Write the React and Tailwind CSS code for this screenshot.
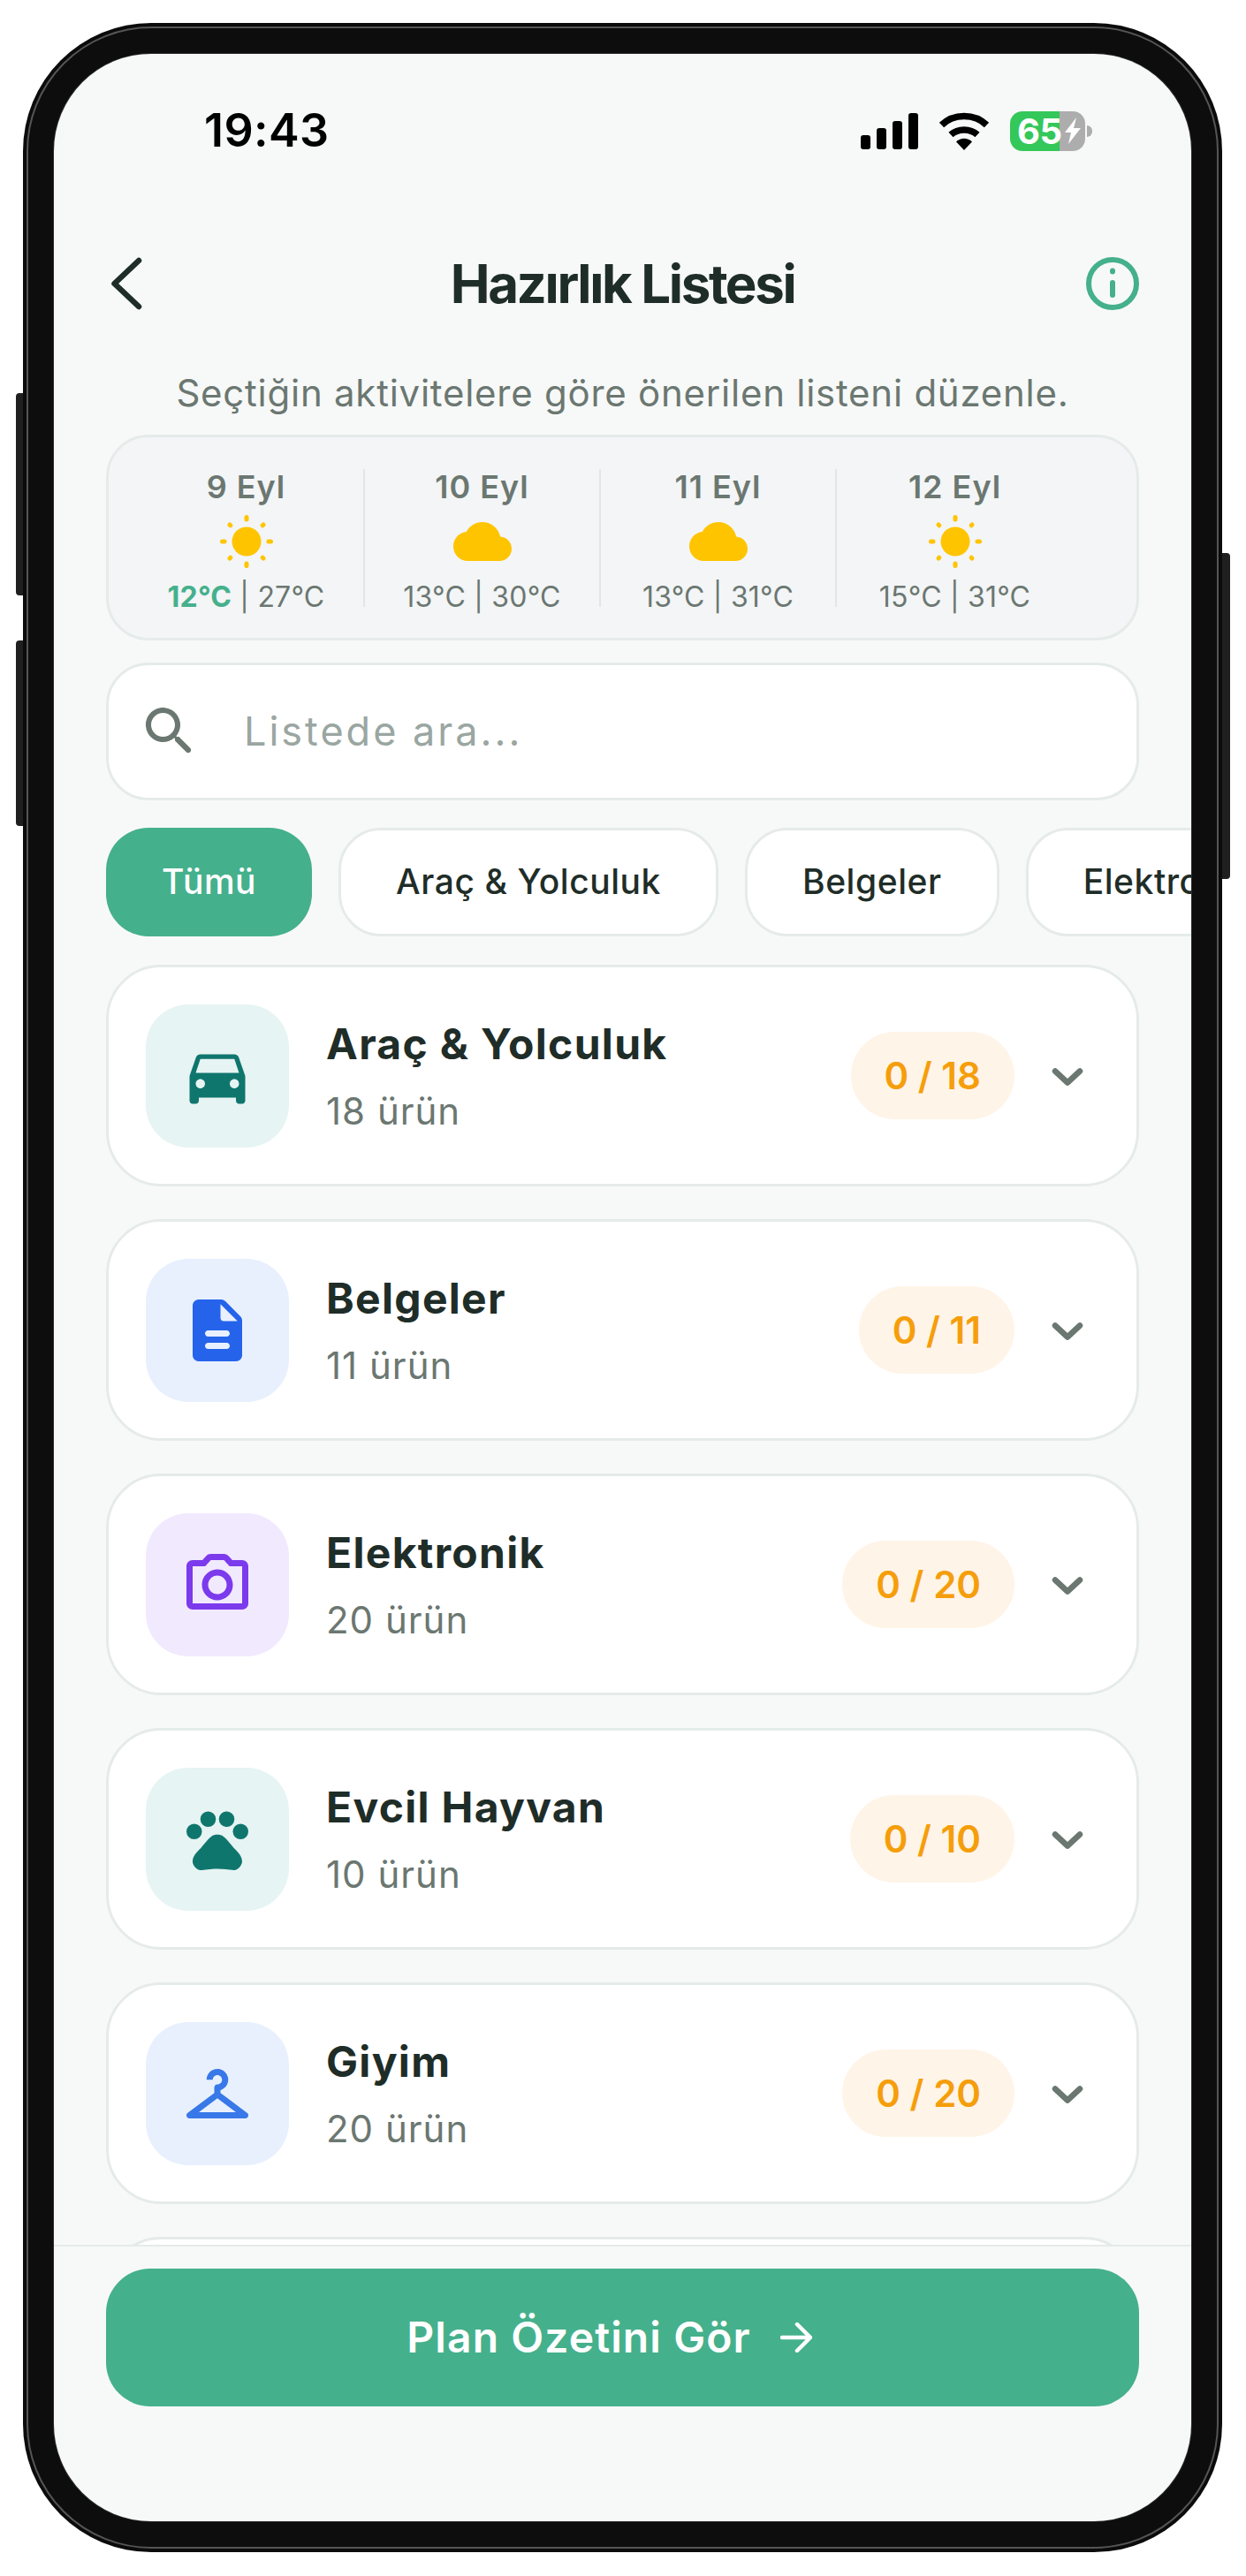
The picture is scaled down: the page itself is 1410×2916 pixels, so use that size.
const days = [
  { date: '9 Eyl', low: '12°C', high: '27°C', icon: 'sun', active: true },
  { date: '10 Eyl', low: '13°C', high: '30°C', icon: 'cloud' },
  { date: '11 Eyl', low: '13°C', high: '31°C', icon: 'cloud' },
  { date: '12 Eyl', low: '15°C', high: '31°C', icon: 'sun' },
]

const chips = ['Araç & Yolculuk', 'Belgeler', 'Elektronik']

const paths = {
  car: 'M18.92 6.01C18.72 5.42 18.16 5 17.5 5h-11c-.66 0-1.21.42-1.42 1.01L3 12v8c0 .55.45 1 1 1h1c.55 0 1-.45 1-1v-1h12v1c0 .55.45 1 1 1h1c.55 0 1-.45 1-1v-8l-2.08-5.99zM6.5 16c-.83 0-1.5-.67-1.5-1.5S5.67 13 6.5 13s1.5.67 1.5 1.5S7.33 16 6.5 16zm11 0c-.83 0-1.5-.67-1.5-1.5s.67-1.5 1.5-1.5 1.5.67 1.5 1.5-.67 1.5-1.5 1.5zM5 11l1.5-4.5h11L19 11H5z',
  doc: 'M14.59 2.59c-.38-.38-.89-.59-1.42-.59H6c-1.1 0-2 .9-2 2v16c0 1.1.89 2 1.99 2H18c1.1 0 2-.9 2-2V8.83c0-.53-.21-1.04-.59-1.41l-4.82-4.83zM15 18H9c-.55 0-1-.45-1-1s.45-1 1-1h6c.55 0 1 .45 1 1s-.45 1-1 1zm0-4H9c-.55 0-1-.45-1-1s.45-1 1-1h6c.55 0 1 .45 1 1s-.45 1-1 1zm-2-6V3.5L18.5 9H14c-.55 0-1-.45-1-1z',
  camera: 'M20 4h-3.17l-1.24-1.35A1.99 1.99 0 0 0 14.12 2H9.88c-.56 0-1.1.24-1.48.65L7.17 4H4c-1.1 0-2 .9-2 2v12c0 1.1.9 2 2 2h16c1.1 0 2-.9 2-2V6c0-1.1-.9-2-2-2zm0 14H4V6h4.05l1.83-2h4.24l1.83 2H20v12zM12 7c-2.76 0-5 2.24-5 5s2.24 5 5 5 5-2.24 5-5-2.24-5-5-5zm0 8c-1.65 0-3-1.35-3-3s1.35-3 3-3 3 1.35 3 3-1.35 3-3 3z',
  paw: 'M17.34 14.86c-.87-1.02-1.6-1.89-2.48-2.91-.46-.54-1.05-1.08-1.75-1.32-.11-.04-.22-.07-.33-.09-.25-.04-.52-.04-.78-.04s-.53 0-.79.05c-.11.02-.22.05-.33.09-.7.24-1.28.78-1.75 1.32-.87 1.02-1.6 1.89-2.48 2.91-1.31 1.31-2.92 2.76-2.62 4.79.29 1.02 1.02 2.03 2.33 2.32.73.15 3.06-.44 5.54-.44h.18c2.48 0 4.81.58 5.54.44 1.31-.29 2.04-1.31 2.33-2.32.31-2.04-1.3-3.49-2.61-4.8z',
  hanger: 'M21.6 18.2 13 11.75v-.91c1.65-.49 2.8-2.17 2.43-4.05-.26-1.31-1.3-2.4-2.61-2.7C10.54 3.57 8.5 5.3 8.5 7.5h2c0-.83.67-1.5 1.5-1.5s1.5.67 1.5 1.5c0 .84-.69 1.52-1.53 1.5-.54-.01-.97.45-.97.99v1.76L2.4 18.2c-.77.58-.36 1.8.6 1.8h18c.96 0 1.37-1.22.6-1.8zM6 18l6-4.5 6 4.5H6z',
}

const categories = [
  { name: 'Araç & Yolculuk', count: 18, icon: 'car', box: 'bg-[#e6f4f3]', tint: 'text-[#0f766e]' },
  { name: 'Belgeler', count: 11, icon: 'doc', box: 'bg-[#e8f0fe]', tint: 'text-[#2563eb]' },
  { name: 'Elektronik', count: 20, icon: 'camera', box: 'bg-[#f1e9fe]', tint: 'text-[#7c3aed]' },
  { name: 'Evcil Hayvan', count: 10, icon: 'paw', box: 'bg-[#e6f4f3]', tint: 'text-[#0f766e]' },
  { name: 'Giyim', count: 20, icon: 'hanger', box: 'bg-[#e8f0fe]', tint: 'text-[#3878e8]' },
]

function CategoryIcon({ name }) {
  return (
    <svg viewBox="0 0 24 24" className="h-[84px] w-[84px]" fill="currentColor">
      {name === 'paw' && (
        <>
          <circle cx="4.5" cy="9.5" r="2.5" />
          <circle cx="9" cy="5.5" r="2.5" />
          <circle cx="15" cy="5.5" r="2.5" />
          <circle cx="19.5" cy="9.5" r="2.5" />
        </>
      )}
      <path d={paths[name]} />
    </svg>
  )
}

function Sun() {
  return (
    <svg viewBox="0 0 60 60" className="h-[60px] w-[60px]" stroke="#ffc400" strokeWidth="5" strokeLinecap="round">
      <circle cx="30" cy="30" r="16.5" fill="#ffc400" stroke="none" />
      <path d="M30 2.5v2.5M30 55v2.5M2.5 30H5M55 30h2.5M11 11l.8.8M48.2 48.2l.8.8M11 49l.8-.8M48.2 11.8l.8-.8" />
    </svg>
  )
}

function Cloud() {
  return (
    <svg viewBox="0 0 24 16" className="h-[44px] w-[66px]" fill="#ffc400">
      <path d="M19.35 6.04C18.67 2.59 15.64 0 12 0 9.11 0 6.6 1.64 5.35 4.04 2.34 4.36 0 6.91 0 10c0 3.31 2.69 6 6 6h13c2.76 0 5-2.24 5-5 0-2.64-2.05-4.78-4.65-4.96z" />
    </svg>
  )
}

function StatusBar() {
  return (
    <div className="flex h-[174px] shrink-0 items-center justify-between pl-[170px] pr-[112px]">
      <span className="text-[52px] font-semibold tracking-[0.4px] text-black">19:43</span>
      <div className="flex items-center">
        <div className="flex h-[41px] items-end gap-[7px]">
          <div className="h-[16px] w-[11px] rounded-[3px] bg-black" />
          <div className="h-[24px] w-[11px] rounded-[3px] bg-black" />
          <div className="h-[32px] w-[11px] rounded-[3px] bg-black" />
          <div className="h-[41px] w-[11px] rounded-[3px] bg-black" />
        </div>
        <svg viewBox="0 0 58 43" className="ml-[23px] h-[43px] w-[58px]" fill="none" stroke="#000">
          <path d="M3.5 14.5C17 1 41 1 54.5 14.5" strokeWidth="7.5" />
          <path d="M14 25.5C22 18 36 18 44 25.5" strokeWidth="7.5" />
          <path d="M20 33.5C25 28.5 33 28.5 38 33.5L29 43z" fill="#000" stroke="none" />
        </svg>
        <div className="ml-[23px] flex items-center">
          <div className="relative flex h-[45px] w-[85px]">
            <div className="w-[56px] rounded-l-[14px] bg-[#34c759]" />
            <div className="flex-1 rounded-r-[14px] bg-[#adadad]" />
            <span className="absolute left-[8px] top-0 text-[40px] font-bold leading-[45px] tracking-[-0.5px] text-white">65</span>
            <svg viewBox="0 0 18 30" className="absolute left-[62px] top-[7px] h-[30px] w-[18px]" fill="#fff">
              <path d="M13 0 0 17h7l-3 13L18 12h-8z" />
            </svg>
          </div>
          <div className="ml-[2px] h-[13px] w-[6px] rounded-r-full bg-[#adadad]" />
        </div>
      </div>
    </div>
  )
}

function CategoryCard({ item }) {
  return (
    <div className="flex h-[251px] shrink-0 items-center rounded-[62px] border-[3px] border-[#e5ebe9] bg-white px-[42px]">
      <div className={`flex h-[162px] w-[162px] shrink-0 items-center justify-center rounded-[48px] ${item.box} ${item.tint}`}>
        <CategoryIcon name={item.icon} />
      </div>
      <div className="ml-[42px] flex-1">
        <div className="text-[48px] font-bold leading-[60px] tracking-[1.3px] text-[#1f2d28]">{item.name}</div>
        <div className="mt-[21px] text-[42px] leading-[50px] tracking-[1px] text-[#6b7771]">{item.count} ürün</div>
      </div>
      <div className="flex h-[99px] items-center rounded-full bg-[#fff4e8] px-[38px] text-[42px] font-semibold text-[#f59e0b]">
        0 / {item.count}
      </div>
      <svg viewBox="0 0 72 72" className="ml-[24px] h-[72px] w-[72px]" fill="none" stroke="#6b7771" strokeWidth="6.5" strokeLinecap="round" strokeLinejoin="round">
        <path d="M22 30.5 36 43.5 50 30.5" />
      </svg>
    </div>
  )
}

export default function App() {
  return (
    <div className="h-[2916px] w-[1410px] bg-white pl-[26px] pt-[26px] font-['Inter',sans-serif]">
      <div className="relative h-[2863px] w-[1357px] rounded-[145px] bg-[#0b0b0b] p-[4px]">
        <div className="absolute -left-[8px] top-[419px] h-[229px] w-[8px] rounded-l-[4px] bg-[#1f1f1f]" />
        <div className="absolute -left-[8px] top-[699px] h-[210px] w-[8px] rounded-l-[4px] bg-[#1f1f1f]" />
        <div className="absolute -right-[9px] top-[600px] h-[369px] w-[9px] rounded-r-[4px] bg-[#1f1f1f]" />

        <div className="h-full w-full rounded-[141px] border-2 border-[#555555] bg-[#0d0d0d] p-[29px]">
          <div className="flex h-full w-full flex-col overflow-hidden rounded-[110px] bg-[#f7f9f8] ring-1 ring-[#2a2a2a]">
            <StatusBar />

            <header className="flex h-[172px] shrink-0 items-center justify-between px-[59px]">
              <svg viewBox="0 0 60 60" className="h-[60px] w-[60px]" fill="none" stroke="#1f2d28" strokeWidth="6.5" strokeLinecap="round" strokeLinejoin="round">
                <path d="M37 4 9.5 30 37 56" />
              </svg>
              <h1 className="text-[60px] font-bold tracking-[-2.4px] text-[#1f2d28]">Hazırlık Listesi</h1>
              <svg viewBox="0 0 60 60" className="h-[60px] w-[60px]" fill="none" stroke="#45b08c" strokeWidth="6" strokeLinecap="round">
                <circle cx="30" cy="30" r="27" />
                <path d="M30 15.5v1M30 29v14" />
              </svg>
            </header>

            <p className="flex h-[74px] shrink-0 items-center justify-center text-[42px] tracking-[0.75px] text-[#6b7771]">
              Seçtiğin aktivitelere göre önerilen listeni düzenle.
            </p>

            <div className="mx-[59px] mt-[11px] flex h-[233px] shrink-0 items-center rounded-[48px] border-[3px] border-[#e5ebe9] bg-[#f3f5f6] pl-[23px]">
              {days.map((d, i) => (
                <div key={d.date} className={`flex h-[156px] w-[267px] flex-col items-center ${i < 3 ? 'border-r-2 border-[#e2e6e6]' : ''}`}>
                  <span className="mt-[2px] text-[36px] font-semibold leading-[36px] tracking-[1px] text-[#6b7771]">{d.date}</span>
                  <div className="mt-[14px] flex h-[60px] shrink-0 items-center">{d.icon === 'sun' ? <Sun /> : <Cloud />}</div>
                  <span className="mt-[15px] text-[32px] leading-[36px] tracking-[0.2px] text-[#6b7771]">
                    <span className={d.active ? 'font-bold text-[#45b08c]' : ''}>{d.low}</span> | {d.high}
                  </span>
                </div>
              ))}
            </div>

            <div className="mx-[59px] mt-[25px] flex h-[156px] shrink-0 items-center rounded-[48px] border-[3px] border-[#e5ebe9] bg-white pl-[33px]">
              <svg viewBox="0 0 24 24" className="h-[72px] w-[72px]" fill="#6b7771">
                <path d="M15.5 14h-.79l-.28-.27c1.2-1.4 1.82-3.31 1.48-5.34-.47-2.78-2.79-5-5.59-5.34-4.23-.52-7.79 3.04-7.27 7.27.34 2.8 2.56 5.12 5.34 5.59 2.03.34 3.94-.28 5.34-1.48l.27.28v.79l4.25 4.25c.41.41 1.08.41 1.49 0 .41-.41.41-1.08 0-1.49L15.5 14zm-6 0C7.01 14 5 11.99 5 9.5S7.01 5 9.5 5 14 7.01 14 9.5 11.99 14 9.5 14z" />
              </svg>
              <span className="ml-[48px] text-[45px] tracking-[3px] text-[#9aa6a1]">Listede ara...</span>
            </div>

            <div className="mt-[31px] flex h-[123px] shrink-0 gap-[30px] overflow-hidden pl-[59px]">
              <div className="flex h-full shrink-0 items-center rounded-[48px] bg-[#45b08c] px-[63px] text-[39px] font-medium tracking-[0.5px] text-white">
                Tümü
              </div>
              {chips.map((chip) => (
                <div key={chip} className="flex h-full shrink-0 items-center rounded-[48px] border-[3px] border-[#e5ebe9] bg-white px-[62px] text-[39px] font-medium tracking-[0.55px] text-[#1f2d28]">
                  {chip}
                </div>
              ))}
            </div>

            <div className="mt-[32px] flex min-h-0 flex-1 flex-col gap-[37px] overflow-hidden px-[59px]">
              {categories.map((item) => (
                <CategoryCard key={item.name} item={item} />
              ))}
              <div className="h-[251px] shrink-0 rounded-[62px] border-[3px] border-[#e5ebe9] bg-white" />
            </div>

            <div className="h-[313px] shrink-0 border-t-[2px] border-[#e5ebe9] px-[59px] pt-[25px]">
              <div className="flex h-[156px] items-center justify-center rounded-[50px] bg-[#45b08c] pr-[30px] text-[48px] font-semibold tracking-[1.1px] text-white">
                Plan Özetini Gör
                <svg viewBox="0 0 36 34" className="ml-[33px] h-[34px] w-[36px]" fill="none" stroke="#fff" strokeWidth="4.5" strokeLinecap="round" strokeLinejoin="round">
                  <path d="M2 17h32M19 2l15 15-15 15" />
                </svg>
              </div>
            </div>
          </div>
        </div>
      </div>
    </div>
  )
}
